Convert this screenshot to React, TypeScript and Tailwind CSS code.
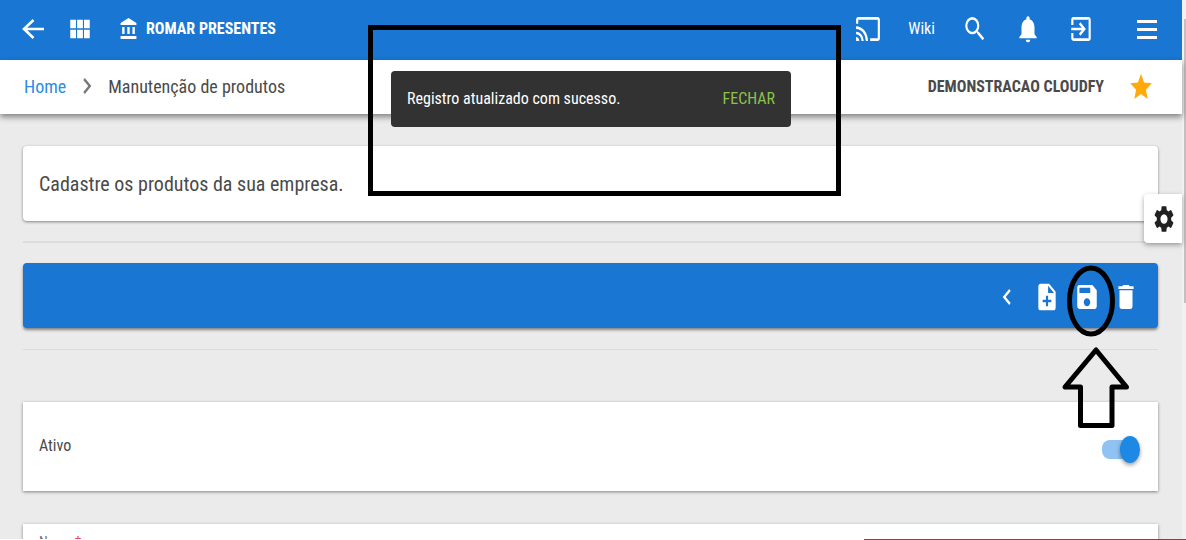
import { useState } from "react"
import type { ComponentType, ReactNode, SVGProps } from "react"
import {
  MdAccountBalance,
  MdCast,
  MdChevronLeft,
  MdChevronRight,
  MdDelete,
  MdExitToApp,
  MdNoteAdd,
  MdNotifications,
  MdSave,
  MdSearch,
  MdSettings,
  MdStar,
  MdViewModule,
} from "react-icons/md"

type IconType = ComponentType<SVGProps<SVGSVGElement>>

type IconButtonProps = {
  label: string
  icon: IconType
  className?: string
}

function BackIcon(props: SVGProps<SVGSVGElement>) {
  return (
    <svg viewBox="0 0 26 32" fill="none" stroke="currentColor" strokeWidth="2.6" {...props}>
      <path d="M13.5 7 4 16l9.5 9M4 16h20" />
    </svg>
  )
}

function MenuIcon(props: SVGProps<SVGSVGElement>) {
  return (
    <svg viewBox="0 0 26 32" fill="currentColor" {...props}>
      <path d="M3 7h20v3H3zM3 15h20v3H3zM3 23h20v3H3z" />
    </svg>
  )
}

function IconButton({ label, icon: Icon, className = "" }: IconButtonProps) {
  return (
    <button type="button" aria-label={label} className={`shrink-0 ${className}`}>
      <Icon className="h-8 w-[26px]" preserveAspectRatio="none" />
    </button>
  )
}

function TopBar() {
  return (
    <header className="flex h-[60px] items-center justify-between bg-[#1976d2] pl-5 pr-[22px] pb-[2px] text-white">
      <div className="flex items-center">
        <IconButton label="Voltar" icon={BackIcon} />
        <IconButton label="Módulos" icon={MdViewModule} className="ml-[21px]" />
        <div className="ml-[26px] flex items-center gap-2">
          <MdAccountBalance className="h-6 w-[19px]" preserveAspectRatio="none" />
          <span className="text-[16px] font-bold">ROMAR PRESENTES</span>
        </div>
      </div>

      <nav className="flex items-center">
        <IconButton label="Transmitir" icon={MdCast} />
        <a href="#wiki" className="mx-[27px] text-[16px]">Wiki</a>
        <IconButton label="Pesquisar" icon={MdSearch} />
        <IconButton label="Notificações" icon={MdNotifications} className="ml-[27px]" />
        <IconButton label="Sair" icon={MdExitToApp} className="ml-[27px]" />
        <IconButton label="Menu" icon={MenuIcon} className="ml-10" />
      </nav>
    </header>
  )
}

function Breadcrumb() {
  return (
    <div className="relative flex h-[54px] items-center justify-between bg-white pl-6 pr-7 text-[#4a4a4a] shadow-[0_3px_6px_rgba(0,0,0,0.45)]">
      <nav className="flex items-center pb-[2px] text-[18px]">
        <a href="#home" className="text-[#2e8be6]">Home</a>
        <MdChevronRight className="mx-2 h-8 w-[26px] text-[#777]" preserveAspectRatio="none" />
        <span>Manutenção de produtos</span>
      </nav>
      <div className="flex items-center gap-6">
        <span className="text-[16px] font-bold">DEMONSTRACAO CLOUDFY</span>
        <IconButton label="Favorito" icon={MdStar} className="text-[#ffa90a]" />
      </div>
    </div>
  )
}

function Card({ children, className = "" }: { children: ReactNode; className?: string }) {
  return (
    <section className={`bg-white shadow-[0_1px_3px_rgba(0,0,0,0.45)] ${className}`}>
      {children}
    </section>
  )
}

function Toast() {
  return (
    <div
      role="status"
      className="absolute left-1/2 top-[71px] flex h-14 w-[400px] -translate-x-1/2 items-center justify-between rounded bg-[#323232] px-4 text-[16px] text-white"
    >
      <span>Registro atualizado com sucesso.</span>
      <button type="button" className="text-[#8bc34a]">FECHAR</button>
    </div>
  )
}

// Hand-drawn marks that point to the message and to the save button
function Marks() {
  return (
    <>
      <div className="pointer-events-none absolute left-[368px] top-[25px] h-[171px] w-[473px] border-5 border-black" />
      <svg
        viewBox="0 0 70 166"
        fill="none"
        stroke="#000"
        strokeWidth="5"
        className="pointer-events-none absolute right-[51px] top-[264px] h-[166px] w-[70px]"
      >
        <ellipse cx="30" cy="37" rx="21.5" ry="33" />
        <path d="M35 86 4 123H19.500V161.500H51V123H65.500Z" strokeLinejoin="round" />
      </svg>
    </>
  )
}

export default function App() {
  const [active, setActive] = useState(true)

  return (
    <div className="flex h-screen overflow-hidden bg-[#ebebeb] font-['Roboto_Condensed','Liberation_Sans_Narrow',Roboto,sans-serif] text-[#4a4a4a]">
      <div className="relative min-w-0 flex-1">
        <TopBar />
        <Breadcrumb />

        <main className="px-6 pl-[23px] pt-8">
          <Card className="flex h-[75px] items-center rounded px-4">
            <h1 className="text-[20px]">Cadastre os produtos da sua empresa.</h1>
          </Card>

          <hr className="mt-5 border-t-2 border-[#dcdcdc]" />

          <div className="mt-5 flex h-[65px] items-center justify-end rounded bg-[#1976d2] pr-[19px] pt-[2px] text-white shadow-[0_2px_3px_rgba(0,0,0,0.45)]">
            <IconButton label="Anterior" icon={MdChevronLeft} />
            <IconButton label="Novo" icon={MdNoteAdd} className="ml-[14px]" />
            <IconButton label="Salvar" icon={MdSave} className="ml-[14px]" />
            <IconButton label="Excluir" icon={MdDelete} className="ml-[13px]" />
          </div>

          <hr className="mt-[21px] border-[#dcdcdc]" />

          <Card className="mt-[52px] px-4">
            <label className="flex h-[89px] items-center justify-between pb-[2px] text-[16px]">
              Ativo
              <span className="relative mr-1 mt-2 flex h-7 w-9 items-center">
                <input
                  type="checkbox"
                  role="switch"
                  checked={active}
                  onChange={(e) => setActive(e.target.checked)}
                  className="peer h-[19px] w-8 appearance-none rounded-lg bg-[#bbb] checked:bg-[#90c3f3]"
                />
                <span className="absolute left-0 h-[27px] w-5 rounded-[50%] bg-white shadow-[0_2px_4px_rgba(0,0,0,0.4)] peer-checked:left-[18px] peer-checked:bg-[#1e88e5]" />
              </span>
            </label>
          </Card>

          <Card className="mt-[33px] px-4 pt-2 pb-4">
            <label htmlFor="nome" className="block text-[14px] text-[#757575]">
              Nome <span className="text-[#e53935]">*</span>
            </label>
            <input id="nome" type="text" className="h-8 w-full outline-none" />
          </Card>
        </main>

        <button
          type="button"
          aria-label="Configurações"
          className="absolute right-0 top-[194px] flex h-[49px] w-[38px] items-center justify-center rounded-l bg-white pl-[2px] text-[#212121] shadow-[0_2px_5px_rgba(0,0,0,0.35)]"
        >
          <MdSettings className="h-8 w-6" preserveAspectRatio="none" />
        </button>

        <Toast />
        <Marks />
      </div>

      {/* page scroll track */}
      <div className="w-1 shrink-0 bg-[#f1f1f1] pl-[2px] pt-[19px]">
        <div className="h-[284px] bg-[#c1c1c1]" />
      </div>

      <div className="absolute bottom-0 left-0 flex h-px w-full bg-white">
        <div className="ml-auto w-[322px] bg-[#a8323c]" />
      </div>
    </div>
  )
}
